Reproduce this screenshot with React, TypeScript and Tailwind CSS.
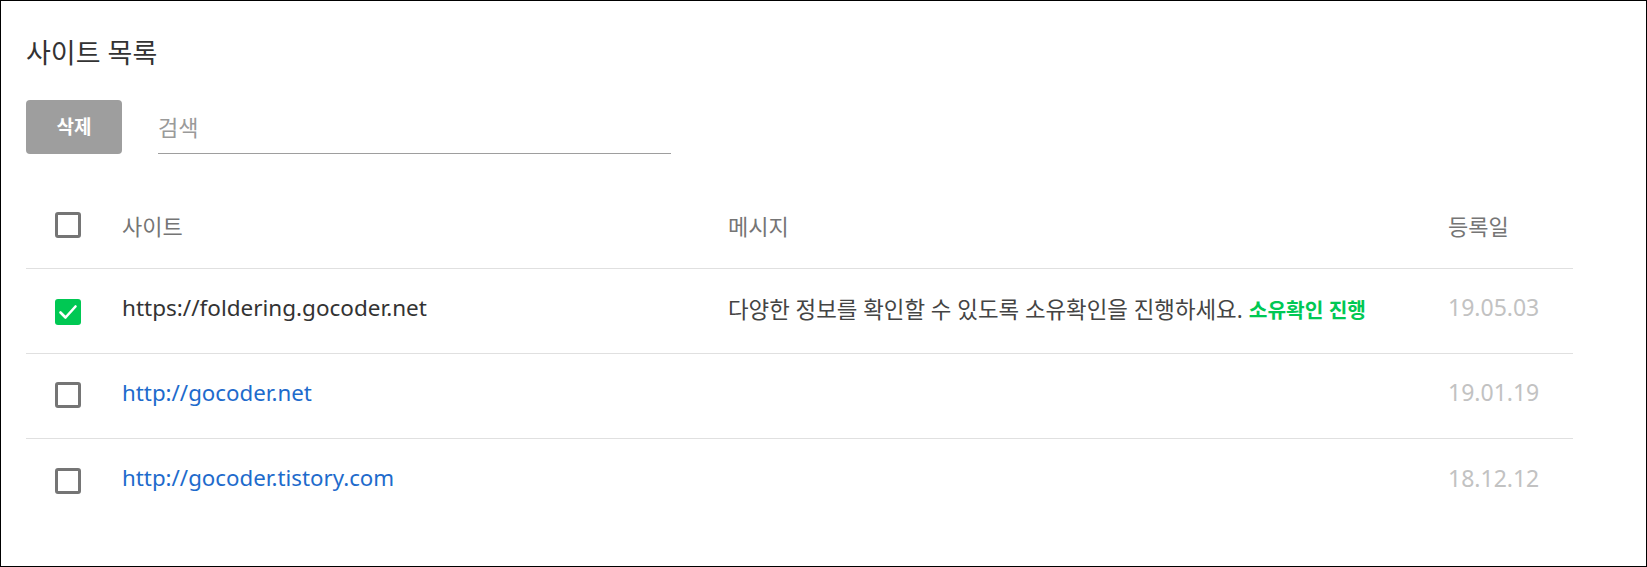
import { useState } from 'react'

const SITES = [
  {
    url: 'https://foldering.gocoder.net',
    verified: false,
    date: '19.05.03',
  },
  {
    url: 'http://gocoder.net',
    verified: true,
    date: '19.01.19',
  },
  {
    url: 'http://gocoder.tistory.com',
    verified: true,
    date: '18.12.12',
  },
]

function CheckBox({ checked, onChange }: { checked: boolean; onChange: () => void }) {
  if (checked) {
    return (
      <button
        onClick={onChange}
        className="flex h-[26px] w-[26px] items-center justify-center rounded-[3px] bg-[#00c853]"
      >
        <svg width="22" height="22" viewBox="0 0 22 22" fill="none">
          <path d="M3.5 11.5l5 5L18.5 5.5" stroke="#fff" strokeWidth="2.6" strokeLinecap="round" strokeLinejoin="round" />
        </svg>
      </button>
    )
  }
  return (
    <button
      onClick={onChange}
      className="h-[26px] w-[26px] rounded-[3px] border-[3px] border-[#757575] bg-white"
    />
  )
}

export default function App() {
  const [checked, setChecked] = useState<boolean[]>([true, false, false])
  const allChecked = checked.every(Boolean)

  const toggle = (i: number) => setChecked((prev) => prev.map((v, j) => (j === i ? !v : v)))

  return (
    <div className="h-[567px] w-[1647px] border border-black bg-white px-[25px] font-['Noto_Sans','Noto_Sans_CJK_KR',sans-serif]">
      <h1 className="pt-[33px] text-[27px] leading-[38px] text-[#333]">사이트 목록</h1>

      {/* Toolbar */}
      <div className="mt-[28px] flex items-start gap-[36px]">
        <button className="h-[54px] w-[96px] rounded-[4px] bg-[#9e9e9e] text-[19px] font-bold text-white">
          삭제
        </button>
        <input
          placeholder="검색"
          className="h-[54px] w-[513px] border-b border-[#9e9e9e] bg-transparent text-[22px] text-[#333] outline-none placeholder:text-[#9a9a9a]"
        />
      </div>

      {/* Table */}
      <div className="mt-[30px] w-[1547px]">
        <div className="grid h-[85px] grid-cols-[96px_606px_720px_125px] items-center border-b border-[#e0e0e0] text-[22px] text-[#757575]">
          <div className="pl-[29px] pt-[1px]">
            <CheckBox
              checked={allChecked}
              onChange={() => setChecked(checked.map(() => !allChecked))}
            />
          </div>
          <div>사이트</div>
          <div>메시지</div>
          <div>등록일</div>
        </div>

        {SITES.map((site, i) => (
          <div
            key={site.url}
            className={`grid h-[85px] grid-cols-[96px_606px_720px_125px] items-center ${
              i < SITES.length - 1 ? 'border-b border-[#e0e0e0]' : ''
            }`}
          >
            <div className="pl-[29px] pt-[1px]">
              <CheckBox checked={checked[i]} onChange={() => toggle(i)} />
            </div>
            <div className={`pb-[7px] ${site.verified ? 'text-[22.3px] text-[#1e6bcc]' : 'text-[22.5px] text-[#333]'}`}>
              {site.url}
            </div>
            <div className="pb-[3px] text-[22.4px] text-[#444]">
              {!site.verified && (
                <>
                  다양한 정보를 확인할 수 있도록 소유확인을 진행하세요.
                  <span className="ml-[6px] text-[20.3px] font-bold text-[#00c853]">소유확인 진행</span>
                </>
              )}
            </div>
            <div className="pb-[7px] text-[23px] text-[#c2c2c2]">{site.date}</div>
          </div>
        ))}
      </div>
    </div>
  )
}
